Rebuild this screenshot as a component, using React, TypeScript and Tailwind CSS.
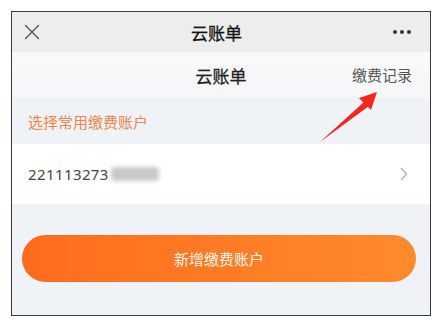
import React from "react";

const font = { fontFamily: '"Noto Sans CJK SC", "Noto Sans", sans-serif' };

export default function App() {
  return (
    <div className="w-[444px] h-[328px] bg-white pt-[11px] pl-[11px] relative" style={font}>
      <div className="w-[420px] h-[305px] border border-[#3a3a3a] bg-[#eff2f6] flex flex-col overflow-hidden">
        {/* top nav */}
        <div className="h-[40px] bg-[#ededed] flex items-center justify-between px-[12px] shrink-0">
          <svg width="16" height="16" viewBox="0 0 16 16">
            <path d="M1.5 1.5 L14.5 14.5 M14.5 1.5 L1.5 14.5" stroke="#555" strokeWidth="1.4" strokeLinecap="round" />
          </svg>
          <div className="text-[17px] text-[#111] leading-none [-webkit-text-stroke:0.3px_#111]">云账单</div>
          <div className="flex gap-[3px] mr-[7px]">
            <span className="w-[4px] h-[4px] rounded-full bg-[#333]" />
            <span className="w-[4px] h-[4px] rounded-full bg-[#333]" />
            <span className="w-[4px] h-[4px] rounded-full bg-[#333]" />
          </div>
        </div>
        {/* second header */}
        <div className="h-[46px] bg-gradient-to-b from-[#f9f9f9] to-[#f5f6f8] relative flex items-center justify-center shrink-0">
          <div className="text-[17px] text-[#222] leading-none [-webkit-text-stroke:0.3px_#222]">云账单</div>
          <div className="absolute right-[18px] top-[15px] text-[15px] text-[#555] leading-none">缴费记录</div>
        </div>
        {/* section label */}
        <div className="h-[46px] flex items-center pl-[16px] shrink-0">
          <span className="text-[15px] text-[#f3854a] leading-none">选择常用缴费账户</span>
        </div>
        {/* account row */}
        <div className="h-[60px] bg-white flex items-center justify-between pl-[16px] pr-[22px] shrink-0">
          <div className="flex items-center">
            <span className="text-[15px] text-[#444] leading-none tracking-[0.4px]" style={{ fontFamily: '"Noto Sans", sans-serif' }}>221113273</span>
            <span className="ml-[2px] w-[48px] h-[14px] bg-[#c8c8c8] rounded-[4px] blur-[2px]" />
          </div>
          <svg width="8" height="14" viewBox="0 0 8 14">
            <path d="M1.5 1.5 L6.5 7 L1.5 12.5" fill="none" stroke="#b5b5b5" strokeWidth="1.5" strokeLinecap="round" strokeLinejoin="round" />
          </svg>
        </div>
        {/* button */}
        <div className="pt-[31px] pl-[10px]">
          <div className="w-[394px] h-[47px] rounded-full bg-gradient-to-r from-[#fe6b1c] to-[#ff8a2c] flex items-center justify-center">
            <span className="text-[15px] text-[#fff3ea] leading-none">新增缴费账户</span>
          </div>
        </div>
      </div>
      {/* red arrow annotation */}
      <svg className="absolute left-0 top-0 pointer-events-none" width="444" height="328" viewBox="0 0 444 328">
        <path d="M320 142 L365 101 L369 106 Z" fill="#f2281e" />
        <path d="M377 92 L359 98 L371 110 Z" fill="#f2281e" />
      </svg>
    </div>
  );
}
